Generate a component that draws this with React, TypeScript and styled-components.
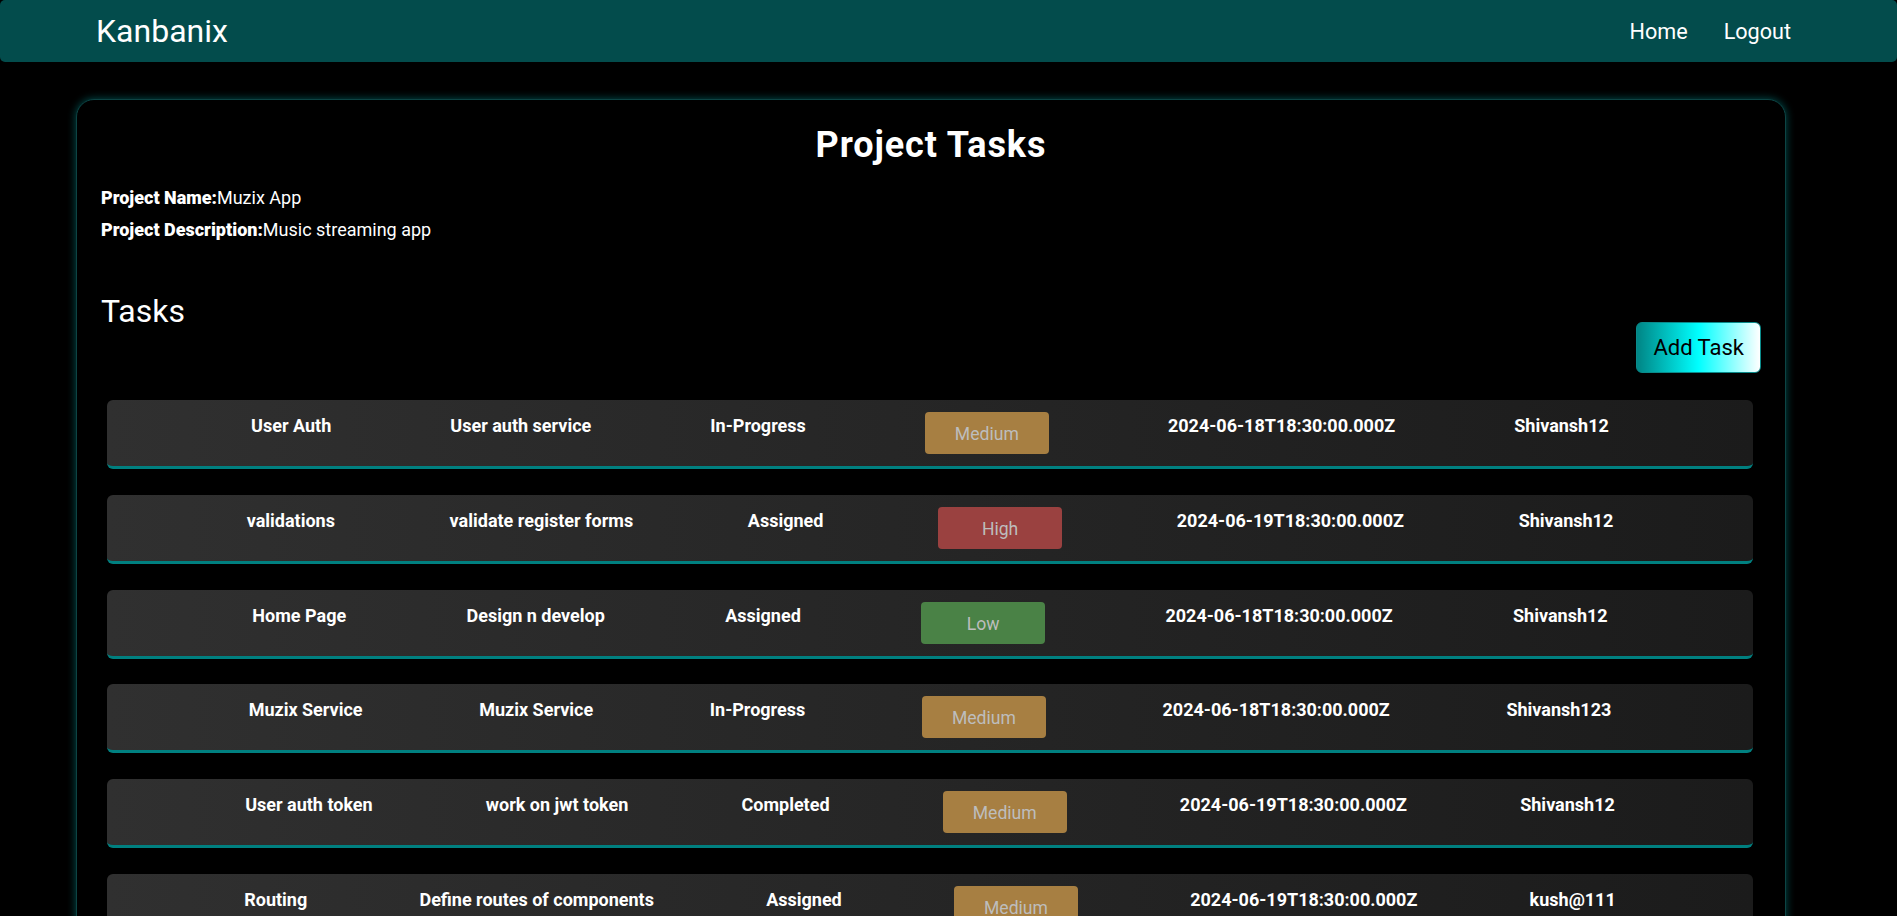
import React from "react";
import styled, { createGlobalStyle } from "styled-components";

const GlobalStyle = createGlobalStyle`
  html, body {
    margin: 0;
    padding: 0;
    background: #000;
    color: #fff;
    font-family: Roboto, "Liberation Sans", Arial, sans-serif;
  }
  * { box-sizing: border-box; }
`;

const NavBar = styled.nav`
  height: 62px;
  background: #034c4c;
  border-radius: 5px;
  display: flex;
  align-items: center;
  justify-content: space-between;
  padding: 0 106px 0 96px;
`;

const Brand = styled.a`
  font-size: 32px;
  color: #fff;
  text-decoration: none;
`;

const NavLinks = styled.div`
  display: flex;
  align-items: center;
  gap: 36px;
`;

const NavLink = styled.a`
  font-size: 21.6px;
  color: #fff;
  text-decoration: none;
`;

const Card = styled.section`
  width: 1710px;
  margin: 37px 0 0 76px;
  padding: 24px 24px 24px;
  border: 1px solid #0d4444;
  border-radius: 18px;
  background: #000;
  box-shadow: 0 0 9px rgba(0, 150, 150, 0.55);
`;

const Title = styled.h1`
  margin: 0 0 17px;
  font-size: 36px;
  line-height: 43px;
  font-weight: 700;
  text-align: center;
  letter-spacing: 0.9px;
`;

const InfoLine = styled.p`
  margin: 0 0 5px;
  font-size: 18px;
  line-height: 27px;
`;

const InfoLabel = styled.strong`
  font-weight: 900;
`;

const TasksHeader = styled.div`
  display: flex;
  justify-content: space-between;
  align-items: flex-start;
  margin-top: 48px;
`;

const TasksHeading = styled.h2`
  margin: 0;
  padding-top: 1px;
  font-size: 32px;
  line-height: 38px;
  font-weight: 400;
`;

const AddButton = styled.button`
  margin-top: 31px;
  height: 51px;
  padding: 0 16px;
  border: 1px solid #0a8a8a;
  border-radius: 6px;
  background: linear-gradient(to right, #008585, #00ffff 50%, #ffffff);
  color: #000;
  font-family: Roboto, "Liberation Sans", Arial, sans-serif;
  font-size: 22px;
  cursor: pointer;
`;

const TaskList = styled.div`
  display: flex;
  flex-direction: column;
  gap: 25.8px;
  margin-top: 27px;
  padding: 0 8px 0 6px;
`;

const TaskRow = styled.div`
  display: flex;
  justify-content: space-evenly;
  align-items: flex-start;
  padding: 12px 25px 12px;
  border-radius: 6px;
  border-bottom: 3px solid #008080;
  background: linear-gradient(to right, #303030, #1b1b1b);
`;

const Cell = styled.span`
  padding-top: 3px;
  font-size: 18px;
  line-height: 21px;
  font-weight: 700;
  color: #fff;
  white-space: nowrap;
`;

const priorityColors: Record<string, string> = {
  Low: "#4a8246",
  Medium: "#a77f42",
  High: "#9a4140",
};

const PriorityBadge = styled.span<{ $level: string }>`
  width: 124px;
  height: 42px;
  display: flex;
  align-items: center;
  justify-content: center;
  padding-top: 2px;
  border-radius: 4px;
  background: ${(p) => priorityColors[p.$level]};
  color: #bdbdbd;
  font-size: 17.6px;
`;

type Task = {
  name: string;
  description: string;
  status: string;
  priority: string;
  due: string;
  assignee: string;
};

const tasks: Task[] = [
  { name: "User Auth", description: "User auth service", status: "In-Progress", priority: "Medium", due: "2024-06-18T18:30:00.000Z", assignee: "Shivansh12" },
  { name: "validations", description: "validate register forms", status: "Assigned", priority: "High", due: "2024-06-19T18:30:00.000Z", assignee: "Shivansh12" },
  { name: "Home Page", description: "Design n develop", status: "Assigned", priority: "Low", due: "2024-06-18T18:30:00.000Z", assignee: "Shivansh12" },
  { name: "Muzix Service", description: "Muzix Service", status: "In-Progress", priority: "Medium", due: "2024-06-18T18:30:00.000Z", assignee: "Shivansh123" },
  { name: "User auth token", description: "work on jwt token", status: "Completed", priority: "Medium", due: "2024-06-19T18:30:00.000Z", assignee: "Shivansh12" },
  { name: "Routing", description: "Define routes of components", status: "Assigned", priority: "Medium", due: "2024-06-19T18:30:00.000Z", assignee: "kush@111" },
];

export default function App() {
  return (
    <>
      <GlobalStyle />
      <NavBar>
        <Brand href="#">Kanbanix</Brand>
        <NavLinks>
          <NavLink href="#">Home</NavLink>
          <NavLink href="#">Logout</NavLink>
        </NavLinks>
      </NavBar>
      <Card>
        <Title>Project Tasks</Title>
        <InfoLine>
          <InfoLabel>Project Name:</InfoLabel>Muzix App
        </InfoLine>
        <InfoLine>
          <InfoLabel>Project Description:</InfoLabel>Music streaming app
        </InfoLine>
        <TasksHeader>
          <TasksHeading>Tasks</TasksHeading>
          <AddButton>Add Task</AddButton>
        </TasksHeader>
        <TaskList>
          {tasks.map((t, i) => (
            <TaskRow key={i}>
              <Cell>{t.name}</Cell>
              <Cell>{t.description}</Cell>
              <Cell>{t.status}</Cell>
              <PriorityBadge $level={t.priority}>{t.priority}</PriorityBadge>
              <Cell>{t.due}</Cell>
              <Cell>{t.assignee}</Cell>
            </TaskRow>
          ))}
        </TaskList>
      </Card>
    </>
  );
}
